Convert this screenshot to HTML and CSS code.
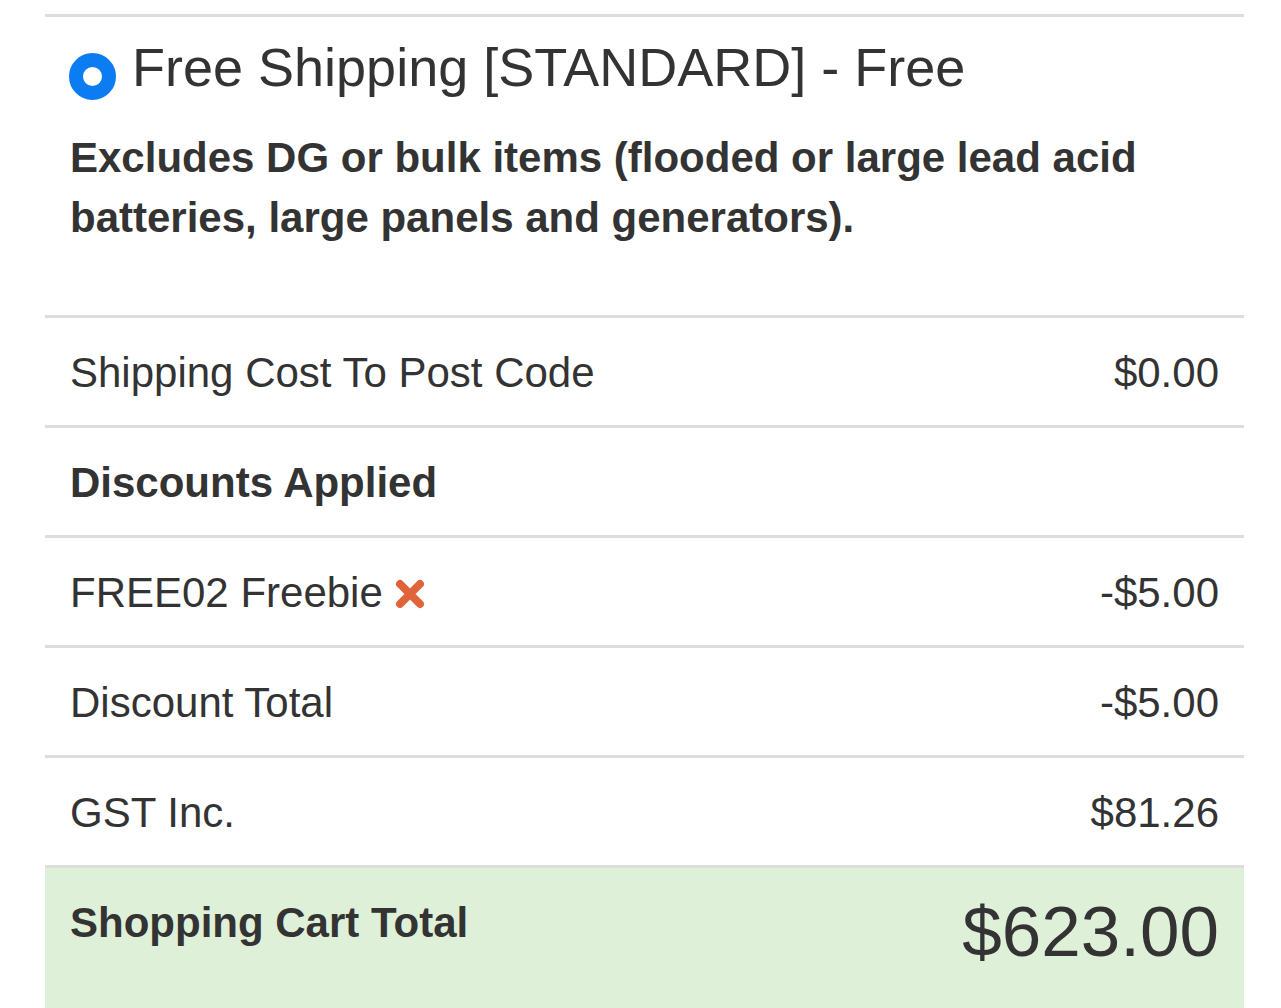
FILE: index.html
```html
<!DOCTYPE html>
<html lang="en">
<head>
  <meta charset="UTF-8">
  <meta name="viewport" content="width=device-width, initial-scale=1.0">
  <title>Cart Totals</title>
  <link rel="stylesheet" href="styles.css">
</head>
<body>
  <div class="cart-totals">
    <div class="shipping-option">
      <label class="option-title">
        <span class="radio"></span>
        Free Shipping [STANDARD] - Free
      </label>
      <p class="option-note">Excludes DG or bulk items (flooded or large lead acid batteries, large panels and generators).</p>
    </div>

    <table class="totals">
      <tr>
        <td>Shipping Cost To Post Code</td>
        <td class="amount">$0.00</td>
      </tr>
      <tr>
        <th colspan="2">Discounts Applied</th>
      </tr>
      <tr>
        <td>FREE02 Freebie
          <svg class="remove" width="30" height="30" viewBox="0 0 30 30">
            <path d="M5 5 L25 25 M25 5 L5 25" stroke="#e0643a" stroke-width="8" stroke-linecap="round"/>
          </svg>
        </td>
        <td class="amount">-$5.00</td>
      </tr>
      <tr>
        <td>Discount Total</td>
        <td class="amount">-$5.00</td>
      </tr>
      <tr>
        <td>GST Inc.</td>
        <td class="amount">$81.26</td>
      </tr>
      <tr class="grand-total">
        <th>Shopping Cart Total</th>
        <td class="amount">$623.00</td>
      </tr>
    </table>
  </div>
</body>
</html>
```

FILE: styles.css
```css
body {
  margin: 0;
  font-family: "Liberation Sans", Arial, sans-serif;
  color: #333;
  background-color: #fff;
}

.cart-totals {
  margin: 14px 0 0 45px;
  width: 1199px;
}

.shipping-option {
  border-top: 3px solid #ddd;
  padding: 16px 25px 67px 24px;
}

.option-title {
  display: flex;
  align-items: center;
  gap: 16px;
  font-size: 54px;
  line-height: 68px;
}

.radio {
  width: 19px;
  height: 19px;
  border: 14.5px solid #0c7cf2;
  border-radius: 50%;
  background-color: #fff;
  margin-top: 18px;
  flex-shrink: 0;
}

.option-note {
  margin: 27px 0 0 1px;
  font-size: 42px;
  line-height: 60px;
  font-weight: bold;
}

.totals {
  width: 100%;
  border-collapse: collapse;
}

.totals td,
.totals th {
  border-top: 3px solid #ddd;
  padding: 25px 25px 22px 25px;
  font-size: 42px;
  line-height: 60px;
  text-align: left;
  vertical-align: top;
}

.totals th {
  font-weight: bold;
}

.totals .amount {
  text-align: right;
}

.remove {
  vertical-align: -2px;
  margin-left: 1px;
}

.grand-total td,
.grand-total th {
  background-color: #dff0d8;
  padding-bottom: 60px;
}

.grand-total .amount {
  font-size: 71px;
  line-height: 78px;
  padding-top: 25px;
}
```
